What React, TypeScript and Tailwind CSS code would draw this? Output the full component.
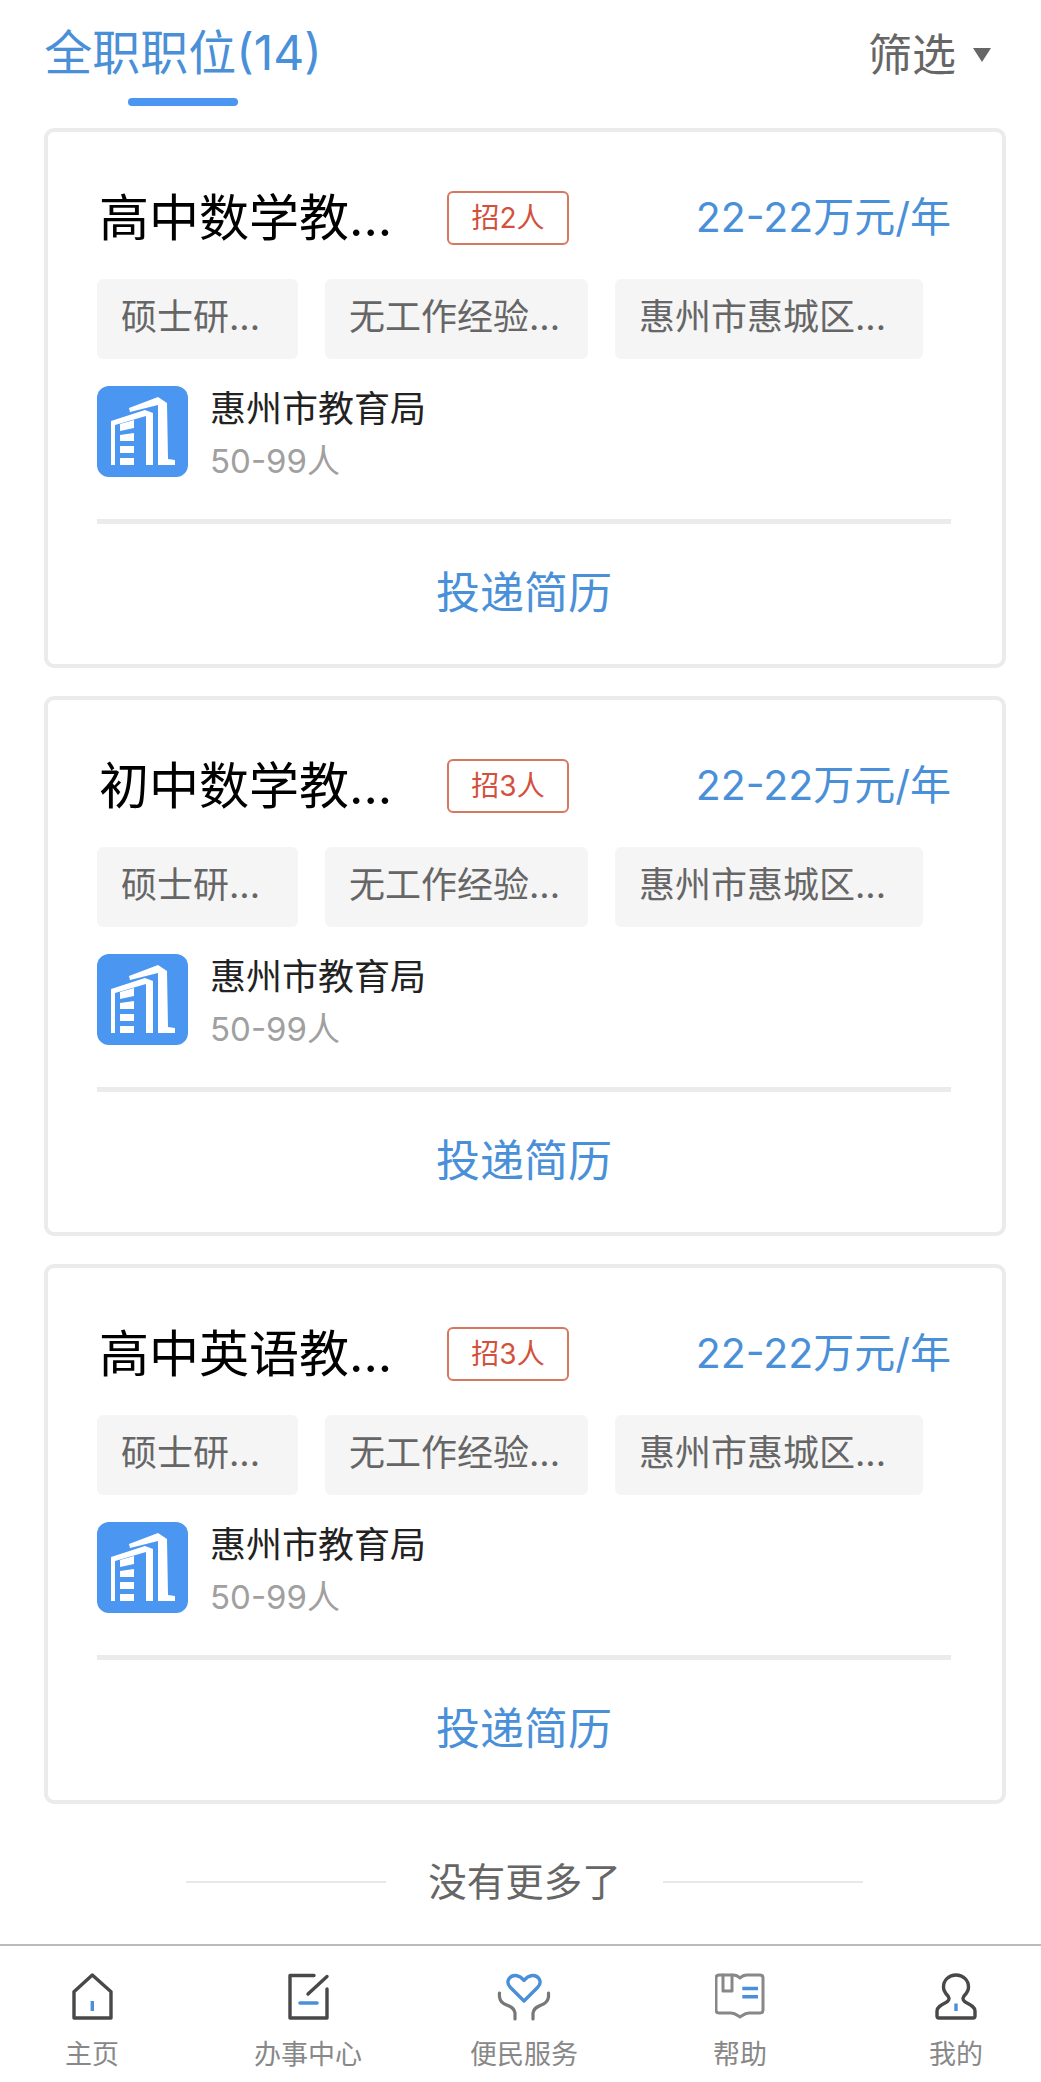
const font = { fontFamily: '"Inter", "Noto Sans CJK SC", sans-serif' }

const jobs = [
  { title: '高中数学教...', count: 2 },
  { title: '初中数学教...', count: 3 },
  { title: '高中英语教...', count: 3 },
]

const navItems = [
  { label: '主页', icon: <HomeIcon /> },
  { label: '办事中心', icon: <EditIcon /> },
  { label: '便民服务', icon: <HeartIcon /> },
  { label: '帮助', icon: <BookIcon /> },
  { label: '我的', icon: <UserIcon /> },
]

function HomeIcon() {
  return (
    <svg width="50" height="50" viewBox="0 0 50 50" fill="none" strokeLinecap="round" strokeLinejoin="round">
      <path d="M25.3 4 44 20.7V47H7V20.7Z" stroke="#484848" strokeWidth="3.4" />
      <path d="M25.3 30v10" stroke="#4a90d9" strokeWidth="3.4" strokeLinecap="butt" />
    </svg>
  )
}

function EditIcon() {
  return (
    <svg width="50" height="50" viewBox="0 0 50 50" fill="none" strokeLinecap="round" strokeLinejoin="round">
      <path d="M31 4.5H7V47H44V18" stroke="#484848" strokeWidth="3.4" />
      <path d="M25 23 44 5.5" stroke="#484848" strokeWidth="3.4" />
      <path d="M17 32H34" stroke="#4a90d9" strokeWidth="3.6" />
    </svg>
  )
}

function HeartIcon() {
  return (
    <svg width="50" height="50" viewBox="0 0 50 50" fill="none" strokeLinecap="round" strokeLinejoin="round" className="overflow-visible">
      <path d="M25 30 11 16C6 10 11 4 17 4.500 20.500 5 23 7 25 9.500 27 7 29.500 5 33 4.500 39 4 44 10 39 16Z" stroke="#4a90d9" strokeWidth="3.400" />
      <path d="M0.500 22C0 27 1 30 4 32 8 35 15 35 16 42V48" stroke="#777" strokeWidth="3.200" />
      <path d="M49.500 22C50 27 49 30 46 32 42 35 35 35 34 42V48" stroke="#777" strokeWidth="3.200" />
    </svg>
  )
}

function BookIcon() {
  return (
    <svg width="50" height="50" viewBox="0 0 50 50" fill="none" strokeLinecap="round" strokeLinejoin="round">
      <path d="M4 4H18C21 4 23 5 25 7 27 5 29 4 32 4H45C47 4 48 5 48 7V39C48 41 47 42 45 42H34C30 42 28 44 25 46 22 44 20 42 16 42H4C2 42 1 41 1 39V7C1 5 2 4 4 4Z" stroke="#888" strokeWidth="3" />
      <path d="M8 4V20H17V4" stroke="#888" strokeWidth="3" />
      <path d="M27.300 17.500H43M27.300 25.700H43" stroke="#4a90d9" strokeWidth="3.400" strokeLinecap="butt" />
    </svg>
  )
}

function UserIcon() {
  return (
    <svg width="50" height="50" viewBox="0 0 50 50" fill="none" strokeLinecap="round" strokeLinejoin="round">
      <path d="M8 47H42C43.500 47 44 46.500 44 45V40C44 36 40 34 36 32 32 30 31 28 33 25 36 22 37.500 19 37.500 16 37.500 9 32 4 25 4 18 4 12.500 9 12.500 16 12.500 19 14 22 17 25 19 28 18 30 14 32 10 34 6 36 6 40V45C6 46.500 6.500 47 8 47Z" stroke="#484848" strokeWidth="3.400" />
      <path d="M25 32.500V40" stroke="#4a90d9" strokeWidth="3.400" strokeLinecap="butt" />
    </svg>
  )
}

function BuildingLogo() {
  return (
    <div className="w-[91px] h-[91px] shrink-0 rounded-[12px] bg-[#4a96f0]">
      <svg width="91" height="91" viewBox="0 0 91 91" fill="#fff">
        <path d="M32 22 61 11 70 17 71 73 78 74V79H61V19L33 26Z" />
        <path d="M14 35 48 24 56 27V79H49V30L18 39V79H14Z" />
        <path d="M23 38 37 34V42L23 45ZM23 49 37 47V55H23ZM23 60H37V67H23ZM23 72H37V79H23Z" />
      </svg>
    </div>
  )
}

function JobCard({ title, count }: { title: string; count: number }) {
  return (
    <div className="h-[540px] rounded-[10px] border-[4px] border-[#ebebeb] bg-white pl-[49px] pr-[51px] pt-[55px]">
      <div className="flex h-[61px] items-center">
        <div className="w-[300px] whitespace-nowrap pl-[2px] text-[50px] leading-[60px] text-black">{title}</div>
        <div className="ml-[50px] flex h-[54px] w-[122px] items-center justify-center rounded-[6px] border-2 border-[#d6785e] text-[28px] text-[#d2513d]">
          招{count}人
        </div>
        <div className="ml-auto whitespace-nowrap text-[41px] text-[#4a90d9]">22-22万元/年</div>
      </div>
      <div className="mt-[31px] flex gap-[27px]">
        <div className="h-[80px] w-[201px] whitespace-nowrap rounded-[6px] bg-[#f5f5f5] px-[24px] text-[36px] leading-[76px] text-[#666]">硕士研...</div>
        <div className="h-[80px] w-[263px] whitespace-nowrap rounded-[6px] bg-[#f5f5f5] px-[24px] text-[36px] leading-[76px] text-[#666]">无工作经验...</div>
        <div className="h-[80px] w-[308px] whitespace-nowrap rounded-[6px] bg-[#f5f5f5] px-[24px] text-[36px] leading-[76px] text-[#666]">惠州市惠城区...</div>
      </div>
      <div className="mt-[27px] flex">
        <BuildingLogo />
        <div className="ml-[22px]">
          <div className="text-[36px] leading-[46px] text-[#222]">惠州市教育局</div>
          <div className="mt-[7px] text-[33px] leading-[44px] text-[#a0a0a0]">50-99人</div>
        </div>
      </div>
      <div className="mt-[36px] h-[5px] bg-[#ebebeb]" />
      <div className="mt-[39px] text-center text-[44px] leading-[60px] text-[#4a90d9]">投递简历</div>
    </div>
  )
}

export default function App() {
  return (
    <div className="flex h-[2082px] flex-col bg-white" style={font}>
      <div className="flex h-[128px] justify-between pl-[45px] pr-[50px]">
        <div className="flex w-[276px] flex-col items-center">
          <div className="mt-[20px] whitespace-nowrap text-[48px] leading-[66px] text-[#4a90d9]">全职职位(14)</div>
          <div className="mt-[12px] h-[8px] w-[110px] rounded-full bg-[#4a96f0]" />
        </div>
        <div className="flex h-[108px] items-center pt-[2px]">
          <span className="text-[44px] text-[#666]">筛选</span>
          <span className="ml-[17px] h-0 w-0 border-x-[9px] border-t-[14px] border-x-transparent border-t-[#666]" />
        </div>
      </div>

      <div className="flex flex-col gap-[28px] pl-[44px] pr-[35px]">
        {jobs.map((job) => (
          <JobCard key={job.title} title={job.title} count={job.count} />
        ))}
      </div>

      <div className="ml-[8px] mt-[54px] flex items-center justify-center">
        <div className="h-[2px] w-[200px] bg-[#e8e8e8]" />
        <div className="mx-[42px] text-[38.5px] leading-[48px] text-[#666]">没有更多了</div>
        <div className="h-[2px] w-[200px] bg-[#e8e8e8]" />
      </div>

      <div className="mt-auto flex h-[138px] gap-[46px] border-t-2 border-[#bbb] pl-[7px] pt-[25px]">
        {navItems.map((item) => (
          <div key={item.label} className="flex w-[170px] flex-col items-center">
            {item.icon}
            <div className="mt-[17px] text-[27px] leading-[34px] text-[#888]">{item.label}</div>
          </div>
        ))}
      </div>
    </div>
  )
}
